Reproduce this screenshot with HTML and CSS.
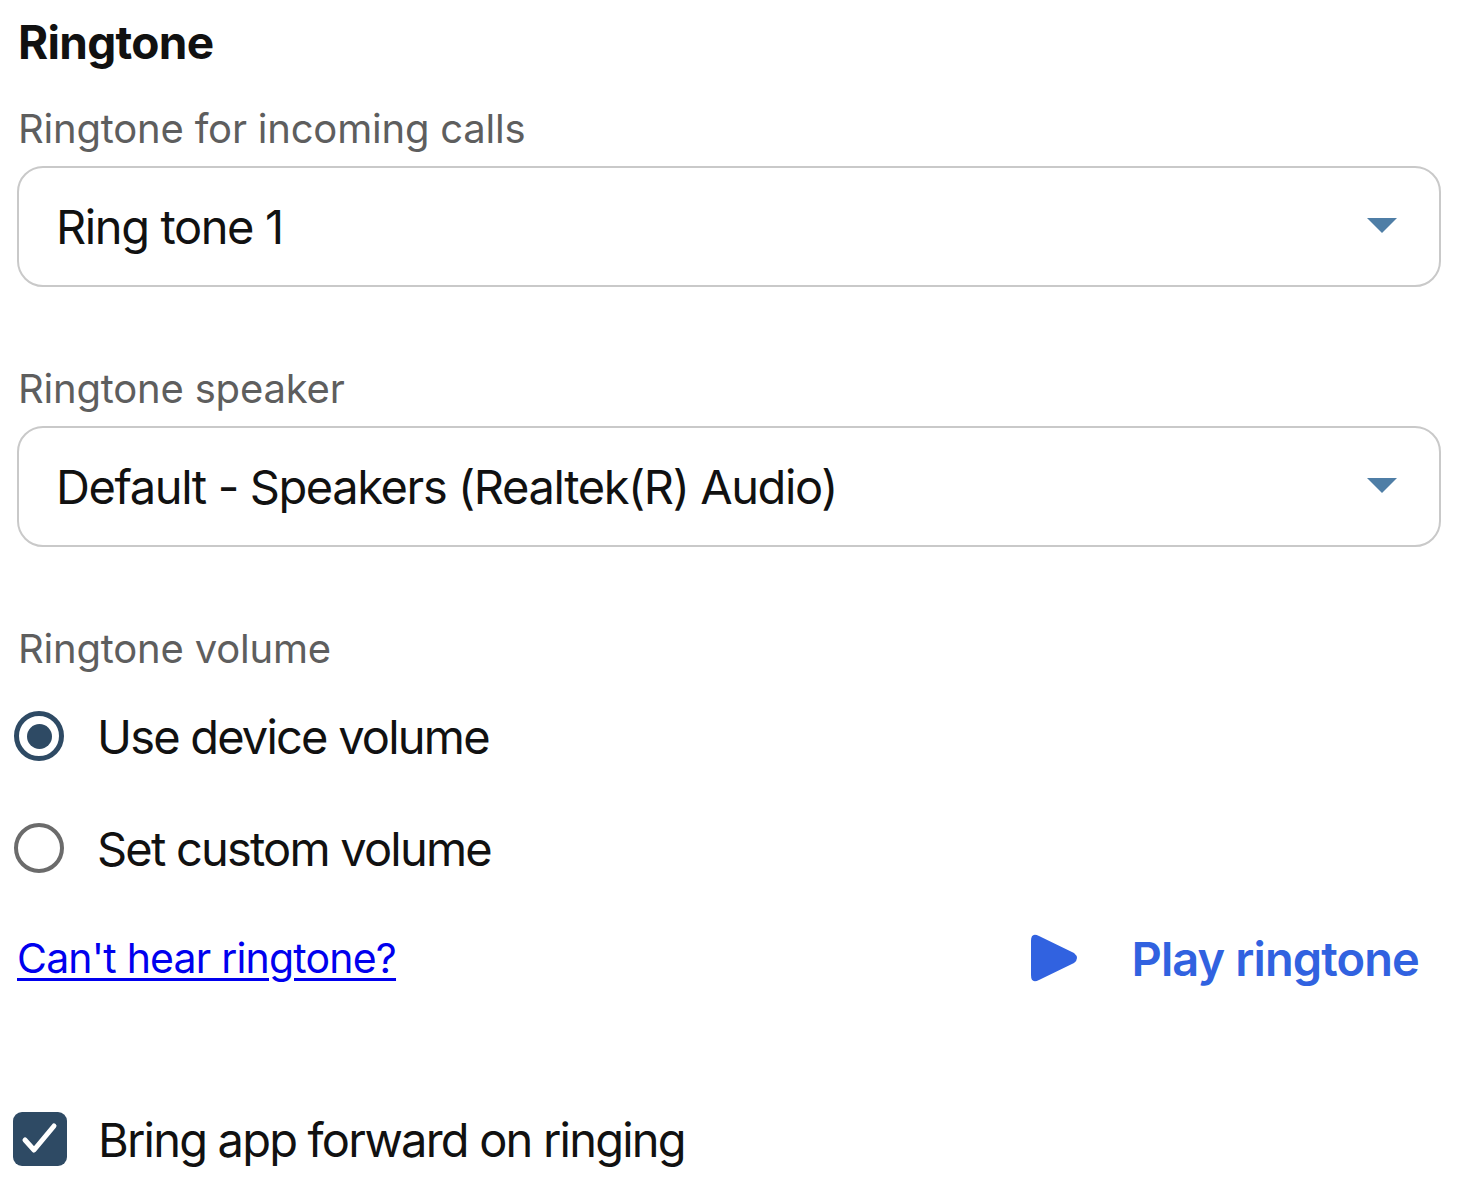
FILE: index.html
```html
<!DOCTYPE html>
<html lang="en">
<head>
<meta charset="utf-8">
<title>Ringtone</title>
<link rel="stylesheet" href="styles.css">
</head>
<body>
<main class="panel">
  <h2 class="title">Ringtone</h2>

  <div class="field">
    <div class="label">Ringtone for incoming calls</div>
    <div class="select">
      <span class="select-value">Ring tone 1</span>
      <svg class="caret" width="30" height="15" viewBox="0 0 30 15"><path d="M0 0 H30 L15 15 Z" fill="#4f7ea6"/></svg>
    </div>
  </div>

  <div class="field">
    <div class="label">Ringtone speaker</div>
    <div class="select">
      <span class="select-value">Default - Speakers (Realtek(R) Audio)</span>
      <svg class="caret" width="30" height="15" viewBox="0 0 30 15"><path d="M0 0 H30 L15 15 Z" fill="#4f7ea6"/></svg>
    </div>
  </div>

  <div class="field volume">
    <div class="label">Ringtone volume</div>
    <div class="radio-row">
      <span class="radio checked"><span class="dot"></span></span>
      <span class="option-text">Use device volume</span>
    </div>
    <div class="radio-row">
      <span class="radio"></span>
      <span class="option-text">Set custom volume</span>
    </div>
  </div>

  <div class="actions">
    <a class="help-link" href="#">Can't hear ringtone?</a>
    <button class="play" type="button">
      <svg class="play-icon" width="50" height="52" viewBox="0 0 50 52"><path d="M1 9 Q1 0 9 4 L44 21 Q50 26 44 31 L9 48 Q1 52 1 43 Z" fill="#3162e0"/></svg>
      <span>Play ringtone</span>
    </button>
  </div>

  <div class="check-row">
    <span class="checkbox"><svg width="54" height="54" viewBox="0 0 54 54"><path d="M12 28 L21 38 L41 14" fill="none" stroke="#fff" stroke-width="5" stroke-linecap="round" stroke-linejoin="round"/></svg></span>
    <span class="option-text">Bring app forward on ringing</span>
  </div>
</main>
</body>
</html>
```

FILE: styles.css
```css
html, body {
  margin: 0;
  padding: 0;
  background: #ffffff;
}

body {
  font-family: "Inter", "Liberation Sans", sans-serif;
  color: #111111;
}

.panel {
  width: 1424px;
  padding: 12px 0 0 17px;
  display: flex;
  flex-direction: column;
}

.title {
  margin: 0;
  font-size: 46px;
  font-weight: 700;
  line-height: 60px;
  letter-spacing: -0.7px;
  color: #111111;
  padding-left: 1px;
}

.field {
  display: flex;
  flex-direction: column;
  margin-top: 32px;
}

.field + .field {
  margin-top: 77px;
}

.label {
  font-size: 40px;
  line-height: 50px;
  color: #5e5e5e;
  letter-spacing: -0.2px;
  padding-left: 1px;
  margin-bottom: 12px;
}

.select {
  height: 117px;
  border: 2px solid #c9c9c9;
  border-radius: 26px;
  display: flex;
  align-items: center;
  justify-content: space-between;
  padding: 0 42px 0 37px;
}

.select-value {
  font-size: 47px;
  letter-spacing: -1.4px;
  color: #111111;
  line-height: 1;
}

.caret {
  display: block;
  margin-top: -2px;
}

.volume .label {
  margin-bottom: 6px;
}

.radio-row {
  display: flex;
  align-items: center;
  height: 112px;
  margin-left: -3px;
}

.radio-row:first-of-type {
  height: 100px;
}

.radio {
  width: 50px;
  height: 50px;
  box-sizing: border-box;
  border: 4px solid #6b6b6b;
  border-radius: 50%;
  display: flex;
  align-items: center;
  justify-content: center;
  flex-shrink: 0;
}

.radio.checked {
  border: 5px solid #2e4a64;
}

.dot {
  width: 25px;
  height: 25px;
  border-radius: 50%;
  background: #2e4a64;
}

.option-text {
  font-size: 47px;
  letter-spacing: -1.8px;
  color: #111111;
  margin-left: 33px;
  line-height: 1;
}

.actions {
  display: flex;
  align-items: center;
  justify-content: space-between;
  height: 100px;
  margin-top: 4px;
  padding-right: 22px;
}

.help-link {
  font-size: 41px;
  letter-spacing: -0.8px;
  color: #0000ee;
  text-decoration: underline;
  text-decoration-thickness: 3px;
  text-underline-offset: 5px;
  line-height: 1;
}

.play {
  display: flex;
  align-items: center;
  background: none;
  border: none;
  padding: 0;
  font-family: inherit;
  font-size: 47px;
  font-weight: 600;
  letter-spacing: -0.9px;
  color: #3162e0;
  cursor: pointer;
}

.play-icon {
  display: block;
  margin-right: 52px;
}

.check-row {
  display: flex;
  align-items: center;
  height: 70px;
  margin-top: 96px;
  margin-left: -4px;
}

.checkbox {
  width: 54px;
  height: 54px;
  border-radius: 9px;
  background: #2e4a64;
  display: flex;
  align-items: center;
  justify-content: center;
  flex-shrink: 0;
}

.checkbox svg {
  display: block;
}

.check-row .option-text {
  margin-left: 31px;
}
```
